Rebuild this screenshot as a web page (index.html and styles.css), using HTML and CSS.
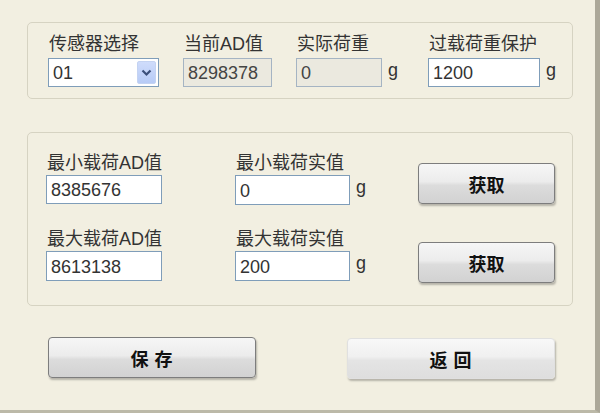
FILE: index.html
```html
<!DOCTYPE html>
<html lang="zh-CN">

<head>
	<meta charset="UTF-8">
	<meta name="viewport" content="width=device-width, initial-scale=1.0">
	<title>传感器标定</title>
	<link rel="stylesheet" href="styles.css">
</head>

<body>
	<div class="window">
		<div class="group group-top">
			<div class="field">
				<label>传感器选择</label>
				<div class="select">
					<span>01</span>
					<span class="select-btn">
						<svg width="11" height="8" viewBox="0 0 11 8"><path d="M1.5 1.5 L5.5 5.5 L9.5 1.5" fill="none" stroke="#3b4f7a" stroke-width="2.2"/></svg>
					</span>
				</div>
			</div>
			<div class="field">
				<label>当前AD值</label>
				<input class="box w89" type="text" value="8298378" readonly disabled>
			</div>
			<div class="field">
				<label>实际荷重</label>
				<div class="row">
					<input class="box w86" type="text" value="0" readonly disabled>
					<span class="unit">g</span>
				</div>
			</div>
			<div class="field">
				<label>过载荷重保护</label>
				<div class="row">
					<input class="box w112" type="text" value="1200">
					<span class="unit">g</span>
				</div>
			</div>
		</div>

		<div class="group group-cal">
			<div class="field">
				<label>最小载荷AD值</label>
				<input class="box w116" type="text" value="8385676">
			</div>
			<div class="field">
				<label>最小载荷实值</label>
				<div class="row">
					<input class="box w115" type="text" value="0">
					<span class="unit">g</span>
				</div>
			</div>
			<button class="btn btn-get">获取</button>

			<div class="field">
				<label>最大载荷AD值</label>
				<input class="box w116" type="text" value="8613138">
			</div>
			<div class="field">
				<label>最大载荷实值</label>
				<div class="row">
					<input class="box w115" type="text" value="200">
					<span class="unit">g</span>
				</div>
			</div>
			<button class="btn btn-get">获取</button>
		</div>

		<div class="actions">
			<button class="btn btn-big">保 存</button>
			<button class="btn btn-big btn-light">返 回</button>
		</div>
	</div>
</body>

</html>
```

FILE: styles.css
```css
body {
	margin: 0;
	padding: 0;
	font-family: "Liberation Sans", "Noto Sans CJK SC", sans-serif;
	color: #333;
	background: #f2efe1;
}

.window {
	width: 568px;
	height: 388px;
	padding: 22px 0 0 27px;
	background: #f2efe1;
	border-right: 5px solid #aca899;
	border-bottom: 3px solid #bcb9a8;
}

.group {
	border: 1px solid #d6d3c2;
	border-radius: 5px;
}

.group-top {
	height: 64px;
	padding: 11px 0 0 20px;
	width: 524px;
	display: grid;
	grid-template-columns: 135px 113px 132px auto;
}

.group-cal {
	margin-top: 33px;
	height: 152px;
	padding: 20px 0 0 18px;
	width: 526px;
	display: grid;
	grid-template-columns: 189px 183px 137px;
	grid-template-rows: 51px 54px;
	row-gap: 25px;
}

.field {
	display: flex;
	flex-direction: column;
}

.field label {
	font-size: 18px;
	line-height: 21px;
	margin-bottom: 1px;
	padding-left: 1px;
}

.group-top .field label {
	margin-bottom: 3px;
}

.row {
	display: flex;
	align-items: flex-start;
}

.unit {
	font-size: 18px;
	margin-left: 6px;
	line-height: 24px;
}

.box {
	box-sizing: border-box;
	height: 29px;
	border: 1px solid #7f9db9;
	background: #fff;
	font-family: "Liberation Sans", sans-serif;
	font-size: 18px;
	color: #333;
	padding: 2px 4px 0;
	margin: 0;
}

.box:disabled {
	background: #ebe9df;
	color: #444;
	border-color: #a5b4c3;
}

.group-cal .box {
	height: 30px;
}

.w86 { width: 86px; }
.w89 { width: 89px; }
.w112 { width: 112px; }
.w115 { width: 115px; }
.w116 { width: 116px; }

.select {
	box-sizing: border-box;
	width: 111px;
	height: 29px;
	border: 1px solid #7f9db9;
	background: #fff;
	display: flex;
	align-items: center;
	justify-content: space-between;
	padding: 0 2px 0 4px;
	font-size: 18px;
}

.select span:first-child {
	padding-top: 2px;
}

.select-btn {
	width: 19px;
	height: 23px;
	box-sizing: border-box;
	border: 1px solid #c4d3f2;
	border-radius: 2px;
	background: linear-gradient(#cfdcfb, #b7cbf6);
	display: flex;
	align-items: center;
	justify-content: center;
}

.btn {
	box-sizing: border-box;
	font-family: "Noto Sans CJK SC", sans-serif;
	font-weight: bold;
	font-size: 18px;
	color: #111;
	border: 1px solid #7d7d7d;
	border-radius: 4px;
	background: linear-gradient(#f6f6f6 0%, #ececec 45%, #dcdcdc 55%, #d2d2d2 100%);
	box-shadow: 1px 2px 2px rgba(0, 0, 0, 0.25);
	cursor: pointer;
}

.btn-get {
	width: 137px;
	height: 41px;
	align-self: end;
}

.actions {
	display: flex;
	margin-top: 31px;
	padding-left: 21px;
	gap: 91px;
}

.btn-big {
	width: 208px;
	height: 41px;
	letter-spacing: 1px;
}

.btn-light {
	margin-top: 1px;
	border-color: #e0e0e0;
	background: linear-gradient(#f8f8f8 0%, #f0f0f0 45%, #e4e4e4 55%, #dedede 100%);
}
```
